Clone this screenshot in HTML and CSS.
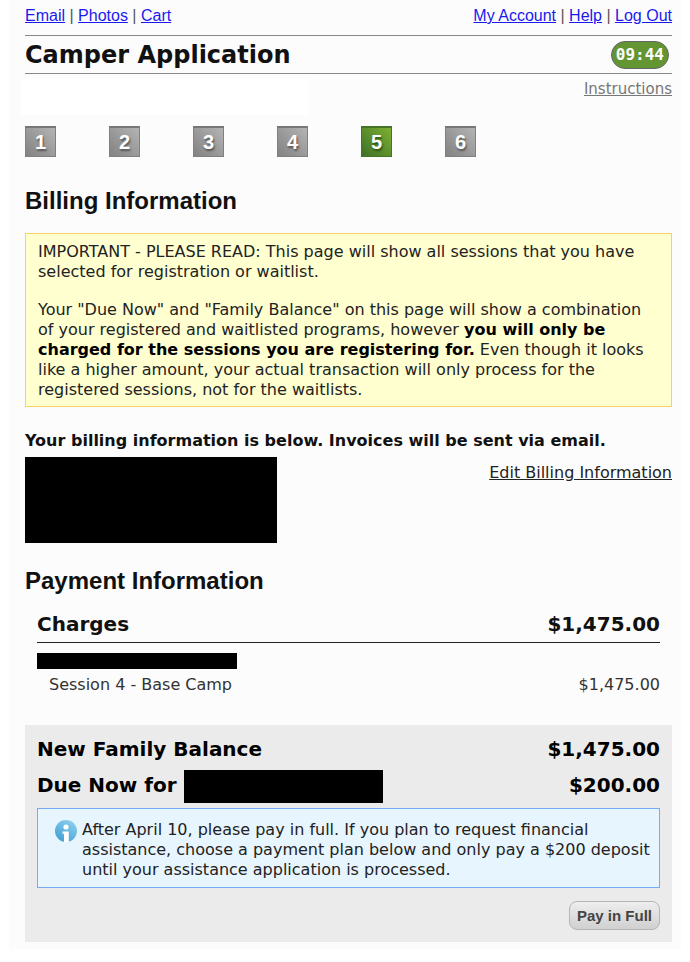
FILE: index.html
```
<!DOCTYPE html>
<html lang="en">
<head>
    <meta charset="UTF-8">
    <meta name="viewport" content="width=device-width, initial-scale=1.0">
    <title>Camper Application</title>
    <link rel="stylesheet" href="styles.css">
</head>
<body>
    <div class="page">
        <nav class="top-links">
            <div>
                <a href="#">Email</a> | <a href="#">Photos</a> | <a href="#">Cart</a>
            </div>
            <div>
                <a href="#">My Account</a> | <a href="#">Help</a> | <a href="#">Log Out</a>
            </div>
        </nav>

        <header class="title-bar">
            <h1>Camper Application</h1>
            <span class="timer">09:44</span>
        </header>

        <div class="sub-bar">
            <div class="camper-name"></div>
            <a class="instructions" href="#">Instructions</a>
        </div>

        <ol class="steps">
            <li>1</li>
            <li>2</li>
            <li>3</li>
            <li>4</li>
            <li class="current">5</li>
            <li>6</li>
        </ol>

        <h2>Billing Information</h2>

        <div class="notice">
            <p>IMPORTANT - PLEASE READ: This page will show all sessions that you have selected for registration or waitlist.</p>
            <p>Your "Due Now" and "Family Balance" on this page will show a combination of your registered and waitlisted programs, however <strong>you will only be charged for the sessions you are registering for.</strong> Even though it looks like a higher amount, your actual transaction will only process for the registered sessions, not for the waitlists.</p>
        </div>

        <p class="billing-intro">Your billing information is below. Invoices will be sent via email.</p>
        <div class="billing">
            <div class="redacted billing-address"></div>
            <a class="edit-link" href="#">Edit Billing Information</a>
        </div>

        <h2>Payment Information</h2>

        <section class="charges">
            <div class="total-row charges-head">
                <h3>Charges</h3>
                <strong>$1,475.00</strong>
            </div>
            <div class="redacted charge-name"></div>
            <div class="charge-row">
                <span>Session 4 - Base Camp</span>
                <span>$1,475.00</span>
            </div>
        </section>

        <section class="balance">
            <div class="total-row">
                <h3>New Family Balance</h3>
                <strong>$1,475.00</strong>
            </div>
            <div class="total-row">
                <h3>Due Now for <span class="redacted due-name"></span></h3>
                <strong>$200.00</strong>
            </div>
            <div class="info">
                <svg class="info-icon" width="22" height="22" viewBox="0 0 22 22" aria-hidden="true">
                    <defs>
                        <linearGradient id="ball" x1="0.8" y1="0" x2="0.2" y2="1">
                            <stop offset="0" stop-color="#8fd0ee"/>
                            <stop offset="1" stop-color="#3f9fd2"/>
                        </linearGradient>
                    </defs>
                    <circle cx="11" cy="11" r="11" fill="url(#ball)"/>
                    <circle cx="11" cy="7" r="2.6" fill="#fff"/>
                    <path d="M7.5 11.5h6.3V22H9v-8.3H7.5z" fill="#fff"/>
                </svg>
                <p>After April 10, please pay in full. If you plan to request financial assistance, choose a payment plan below and only pay a $200 deposit until your assistance application is processed.</p>
            </div>
            <div class="actions">
                <button type="button">Pay in Full</button>
            </div>
        </section>
    </div>
</body>
</html>
```
FILE: styles.css
```
* {
    box-sizing: border-box;
}

body {
    margin: 0 9px;
    background: #fff;
    color: #111;
    font-family: Verdana, "DejaVu Sans", sans-serif;
    font-size: 16px;
    line-height: 20px;
}

h1, h2, h3, p {
    margin: 0;
}

.page {
    padding: 0 9px 7px 16px;
    background: #fcfcfc;
}

.top-links {
    display: flex;
    justify-content: space-between;
    padding: 6px 0 9px;
    color: #555;
    font-family: Arial, "Liberation Sans", sans-serif;
}

.top-links a {
    color: #1a1aee;
}

.title-bar {
    display: flex;
    justify-content: space-between;
    align-items: center;
    height: 39px;
    padding-right: 3px;
    border-top: 1px solid #888;
    border-bottom: 1px solid #888;
}

h1 {
    font-size: 24px;
    line-height: 36px;
}

.timer {
    padding: 3px 4px;
    border: 1px solid #666;
    border-radius: 14px;
    background: #639632;
    color: #fff;
    font-family: "DejaVu Sans Mono", monospace;
    font-size: 16px;
    font-weight: bold;
}

.sub-bar {
    display: flex;
    justify-content: space-between;
    align-items: flex-start;
    padding-top: 5px;
}

.camper-name {
    width: 287px;
    height: 36px;
    margin-left: -4px;
    background: #fff;
}

.instructions {
    color: #777;
    font-size: 15px;
}

.steps {
    display: flex;
    gap: 53px;
    margin: 11px 0 29px;
    padding: 0;
    list-style: none;
}

.steps li {
    width: 31px;
    height: 31px;
    border: 1px solid #808080;
    border-top: 2px solid #777;
    background: linear-gradient(45deg, #828282, #b4b4b4);
    color: #fff;
    font: bold 20px/29px Arial, "Liberation Sans", sans-serif;
    text-align: center;
    text-shadow: 1px 2px 2px #555;
}

.steps .current {
    border-color: #477327;
    background: linear-gradient(45deg, #3f7027, #7cb032);
    text-shadow: 1px 2px 2px #2c5212;
}

h2 {
    font: bold 24px/30px Arial, "Liberation Sans", sans-serif;
}

.notice {
    margin: 17px 0 24px;
    padding: 8px 20px 6px 12px;
    border: 1px solid #f6d265;
    background: #ffffd0;
    color: #222;
}

.notice p + p {
    margin-top: 18px;
}

.notice strong {
    color: #000;
}

.billing-intro {
    margin-bottom: 6px;
    font-weight: bold;
}

.billing {
    display: flex;
    justify-content: space-between;
    align-items: flex-start;
    margin-bottom: 23px;
}

.redacted {
    background: #000;
}

.billing-address {
    width: 252px;
    height: 86px;
}

.edit-link {
    margin-top: 6px;
    color: #222;
}

.charges {
    margin-bottom: 30px;
    padding: 0 12px;
}

.total-row {
    display: flex;
    justify-content: space-between;
    align-items: center;
    font-size: 20px;
    line-height: 36px;
}

h3 {
    font-size: 20px;
}

.charges-head {
    margin-top: 10px;
    border-bottom: 1px solid #222;
}

.charge-name {
    width: 200px;
    height: 16px;
    margin: 10px 0 6px;
}

.charge-row {
    display: flex;
    justify-content: space-between;
    padding-left: 12px;
    color: #333;
}

.balance {
    padding: 6px 12px 12px;
    background: #ebebeb;
    color: #000;
}

.due-name {
    display: inline-block;
    width: 199px;
    height: 33px;
    vertical-align: middle;
}

.info {
    display: flex;
    gap: 5px;
    margin: 5px 0 13px;
    padding: 11px 8px 7px 17px;
    border: 1px solid #78abf5;
    background: #e7f5ff;
    color: #222;
}

.info-icon {
    flex: none;
}

.actions {
    text-align: right;
}

button {
    height: 29px;
    padding: 0 7px;
    border: 1px solid #b5b5b5;
    border-radius: 8px;
    background: linear-gradient(#eee, #d0d0d0);
    color: #444;
    font: bold 15px/20px Arial, "Liberation Sans", sans-serif;
}
```
